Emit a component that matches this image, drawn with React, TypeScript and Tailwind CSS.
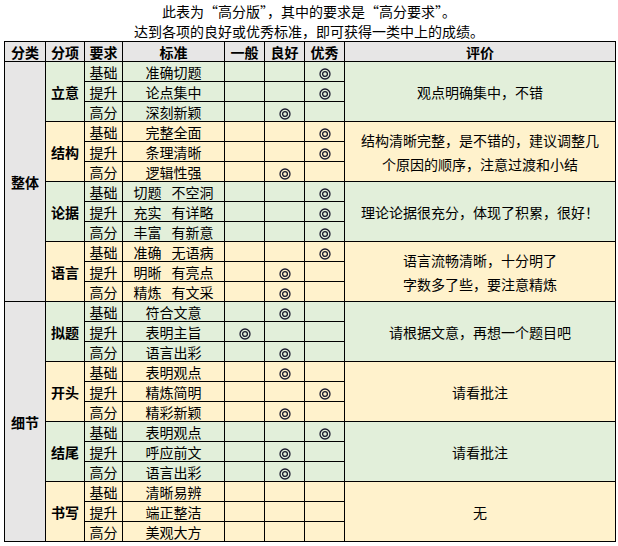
import React from "react";

type Level = "一般" | "良好" | "优秀" | null;

type Item = {
  name: string;
  bg: string;
  rows: [string, string, Level][];
  comment: string[];
};

const GREEN = "bg-[#e2efda]";
const BEIGE = "bg-[#fff2cc]";
const SP = "\u2002 ";

const groups: { name: string; items: Item[] }[] = [
  {
    name: "整体",
    items: [
      {
        name: "立意",
        bg: GREEN,
        rows: [
          ["基础", "准确切题", "优秀"],
          ["提升", "论点集中", "优秀"],
          ["高分", "深刻新颖", "良好"],
        ],
        comment: ["观点明确集中，不错"],
      },
      {
        name: "结构",
        bg: BEIGE,
        rows: [
          ["基础", "完整全面", "优秀"],
          ["提升", "条理清晰", "优秀"],
          ["高分", "逻辑性强", "良好"],
        ],
        comment: ["结构清晰完整，是不错的，建议调整几", "个原因的顺序，注意过渡和小结"],
      },
      {
        name: "论据",
        bg: GREEN,
        rows: [
          ["基础", `切题${SP}不空洞`, "优秀"],
          ["提升", `充实${SP}有详略`, "优秀"],
          ["高分", `丰富${SP}有新意`, "优秀"],
        ],
        comment: ["理论论据很充分，体现了积累，很好！"],
      },
      {
        name: "语言",
        bg: BEIGE,
        rows: [
          ["基础", `准确${SP}无语病`, "优秀"],
          ["提升", `明晰${SP}有亮点`, "良好"],
          ["高分", `精炼${SP}有文采`, "良好"],
        ],
        comment: ["语言流畅清晰，十分明了", "字数多了些，要注意精炼"],
      },
    ],
  },
  {
    name: "细节",
    items: [
      {
        name: "拟题",
        bg: GREEN,
        rows: [
          ["基础", "符合文意", "良好"],
          ["提升", "表明主旨", "一般"],
          ["高分", "语言出彩", "良好"],
        ],
        comment: ["请根据文意，再想一个题目吧"],
      },
      {
        name: "开头",
        bg: BEIGE,
        rows: [
          ["基础", "表明观点", "良好"],
          ["提升", "精炼简明", "优秀"],
          ["高分", "精彩新颖", "良好"],
        ],
        comment: ["请看批注"],
      },
      {
        name: "结尾",
        bg: GREEN,
        rows: [
          ["基础", "表明观点", "优秀"],
          ["提升", "呼应前文", "良好"],
          ["高分", "语言出彩", "良好"],
        ],
        comment: ["请看批注"],
      },
      {
        name: "书写",
        bg: BEIGE,
        rows: [
          ["基础", "清晰易辨", null],
          ["提升", "端正整洁", null],
          ["高分", "美观大方", null],
        ],
        comment: ["无"],
      },
    ],
  },
];

const levels: Level[] = ["一般", "良好", "优秀"];

const Mark = () => (
  <svg width="12" height="12" viewBox="0 0 12 12" className="inline-block align-middle">
    <circle cx="6" cy="6" r="5" fill="none" stroke="#1a1a2e" strokeWidth="1.3" />
    <circle cx="6" cy="6" r="2.4" fill="none" stroke="#1a1a2e" strokeWidth="1.3" />
  </svg>
);

const cell = "border border-black p-0 text-center align-middle";

export default function App() {
  return (
    <div
      className="w-[618px] h-[546px] bg-white text-black text-[14px]"
      style={{ fontFamily: '"Noto Sans CJK SC", "Noto Sans", sans-serif' }}
    >
      <div className="pt-[1px] text-center leading-[20px]">
        <div>此表为“高分版”，其中的要求是“高分要求”。</div>
        <div>达到各项的良好或优秀标准，即可获得一类中上的成绩。</div>
      </div>
      <table className="ml-[4px] w-[611px] table-fixed border-collapse border border-black">
        <colgroup>
          <col className="w-[41px]" />
          <col className="w-[39px]" />
          <col className="w-[38px]" />
          <col className="w-[102px]" />
          <col className="w-[40px]" />
          <col className="w-[40px]" />
          <col className="w-[40px]" />
          <col className="w-[271px]" />
        </colgroup>
        <thead>
          <tr className="h-[20px] bg-[#e7e6e6] font-bold leading-[18px]">
            {["分类", "分项", "要求", "标准", "一般", "良好", "优秀", "评价"].map((h) => (
              <th key={h} className={cell}>
                {h}
              </th>
            ))}
          </tr>
        </thead>
        <tbody>
          {groups.map((g) =>
            g.items.map((item, ii) =>
              item.rows.map(([req, std, lv], ri) => (
                <tr key={g.name + item.name + ri} className={`h-[20px] leading-[18px] ${item.bg}`}>
                  {ii === 0 && ri === 0 && (
                    <td rowSpan={12} className={`${cell} bg-[#e7e6e6] font-bold`}>
                      {g.name}
                    </td>
                  )}
                  {ri === 0 && (
                    <td rowSpan={3} className={`${cell} font-bold`}>
                      {item.name}
                    </td>
                  )}
                  <td className={cell}>{req}</td>
                  <td className={`${cell} whitespace-pre`}>{std}</td>
                  {levels.map((l) => (
                    <td key={l} className={cell}>
                      {lv === l && <Mark />}
                    </td>
                  ))}
                  {ri === 0 && (
                    <td rowSpan={3} className={`${cell} leading-[24px]`}>
                      {item.comment.map((c) => (
                        <div key={c}>{c}</div>
                      ))}
                    </td>
                  )}
                </tr>
              ))
            )
          )}
        </tbody>
      </table>
    </div>
  );
}
